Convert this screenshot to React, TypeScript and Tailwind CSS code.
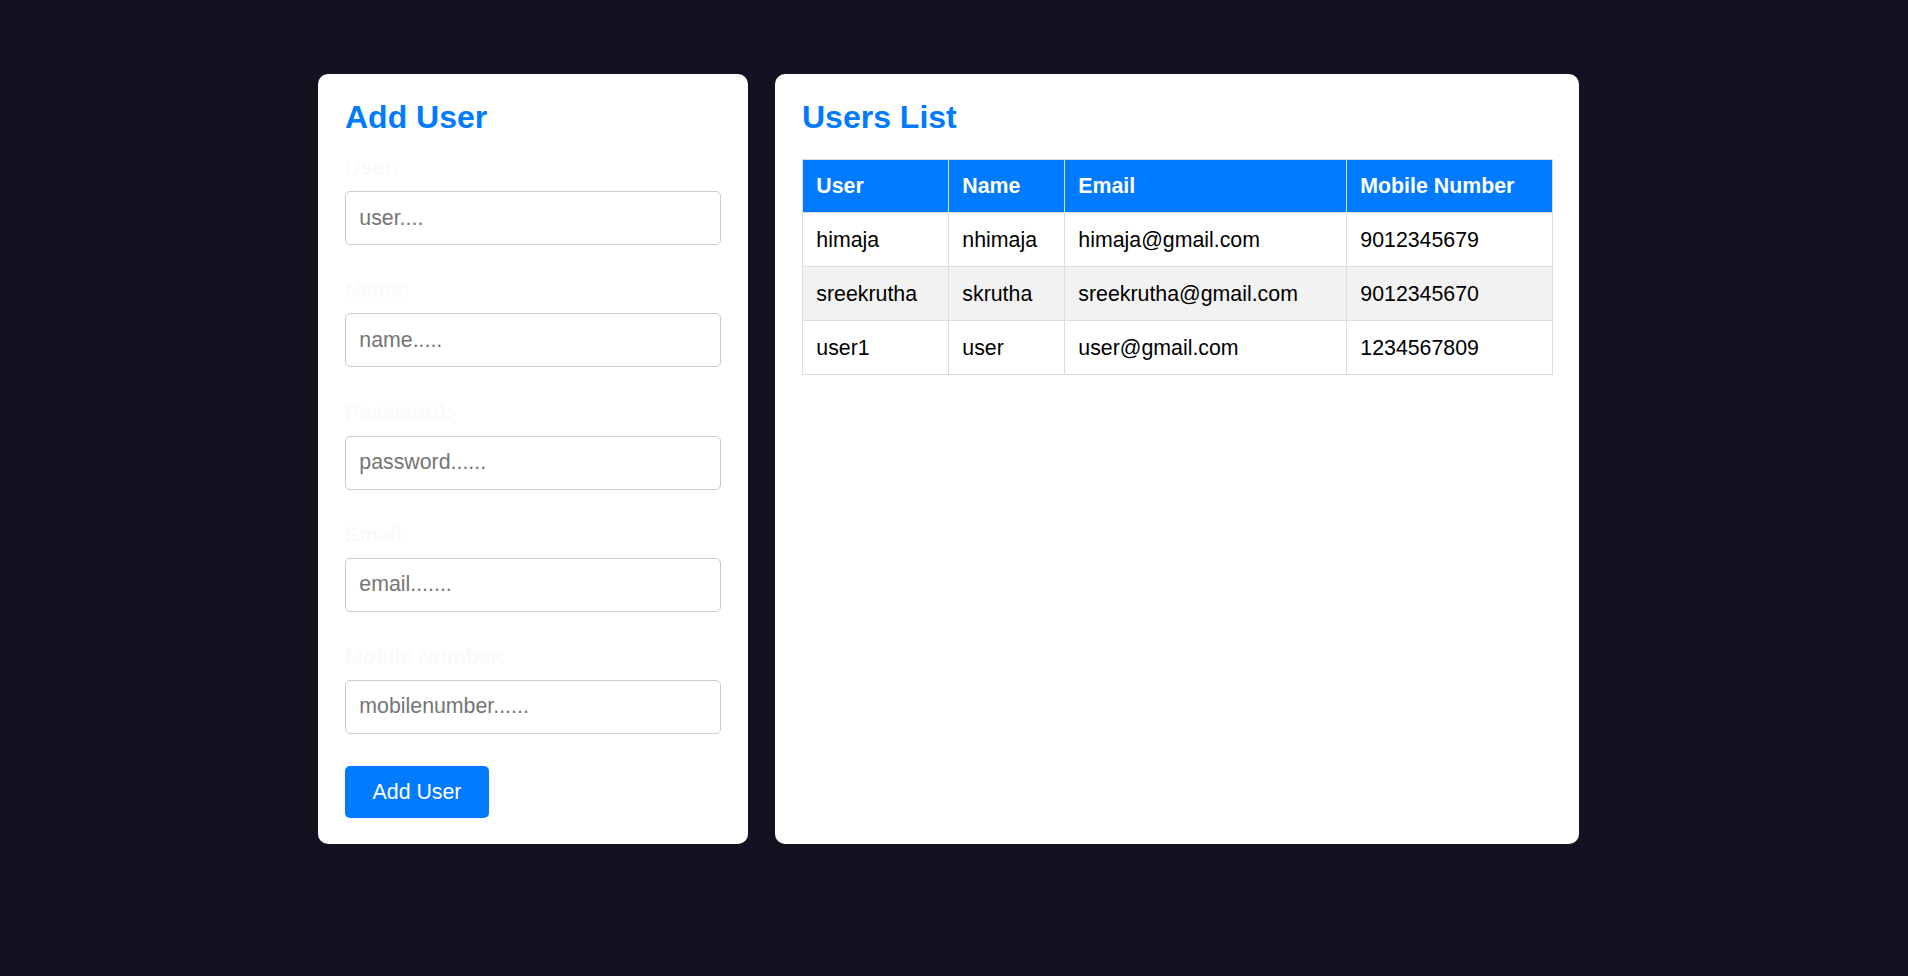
const USERS = [
  { user: "himaja", name: "nhimaja", email: "himaja@gmail.com", mobile: "9012345679" },
  { user: "sreekrutha", name: "skrutha", email: "sreekrutha@gmail.com", mobile: "9012345670" },
  { user: "user1", name: "user", email: "user@gmail.com", mobile: "1234567809" },
];

const FIELDS = [
  { label: "User:", placeholder: "user....", type: "text" },
  { label: "Name:", placeholder: "name.....", type: "text" },
  { label: "Password:", placeholder: "password......", type: "password" },
  { label: "Email:", placeholder: "email.......", type: "email" },
  { label: "Mobile Number:", placeholder: "mobilenumber......", type: "text" },
];

function AddUserForm() {
  return (
    <div className="w-[430px] h-[770px] shrink-0 bg-white rounded-[10px] pt-[25px] px-[27px]">
      <h2 className="text-[32px] leading-[37px] font-bold text-[#007bff] mb-[20px]">Add User</h2>
      <form onSubmit={(e) => e.preventDefault()}>
        {FIELDS.map((f) => (
          <div key={f.label} className="mb-[33px]">
            <label className="block text-[21.33px] leading-[24.5px] font-bold text-[#fafafa] mb-[10.7px]">
              {f.label}
            </label>
            <input
              type={f.type === "password" ? "text" : f.type}
              placeholder={f.placeholder}
              className="block w-full h-[54px] px-[13.3px] border-[1.33px] border-[#cccccc] rounded-[5px] text-[21.33px] text-black placeholder:text-[#757575] outline-none"
            />
          </div>
        ))}
        <button
          type="submit"
          className="-mt-px h-[52.5px] w-[144px] bg-[#007bff] text-white text-[21.33px] leading-[24.5px] rounded-[5px]"
        >
          Add User
        </button>
      </form>
    </div>
  );
}

function UsersList() {
  const th = "border border-[#dddddd] px-[13.3px] text-left font-bold h-[53.6px]";
  const td = "border border-[#dddddd] px-[13.3px] h-[54px]";
  return (
    <div className="w-[804px] h-[770px] shrink-0 bg-white rounded-[10px] pt-[25px] px-[27px]">
      <h2 className="text-[32px] leading-[37px] font-bold text-[#007bff] mb-[22.7px]">Users List</h2>
      <table className="w-[750px] border-collapse table-fixed text-[21.33px] leading-[24.5px] text-black">
        <colgroup>
          <col className="w-[146px]" />
          <col className="w-[116px]" />
          <col className="w-[282px]" />
          <col className="w-[206px]" />
        </colgroup>
        <thead>
          <tr className="bg-[#007bff] text-white">
            <th className={th}>User</th>
            <th className={th}>Name</th>
            <th className={th}>Email</th>
            <th className={th}>Mobile Number</th>
          </tr>
        </thead>
        <tbody>
          {USERS.map((u, i) => (
            <tr key={u.user} className={i % 2 === 1 ? "bg-[#f2f2f2]" : "bg-white"}>
              <td className={td}>{u.user}</td>
              <td className={td}>{u.name}</td>
              <td className={td}>{u.email}</td>
              <td className={td}>{u.mobile}</td>
            </tr>
          ))}
        </tbody>
      </table>
    </div>
  );
}

export default function App() {
  return (
    <div
      className="min-h-screen w-full bg-[#121220] pt-[74px]"
      style={{ fontFamily: '"Liberation Sans", Arial, sans-serif' }}
    >
      <div className="flex gap-[27px] ml-[318px]">
        <AddUserForm />
        <UsersList />
      </div>
    </div>
  );
}
